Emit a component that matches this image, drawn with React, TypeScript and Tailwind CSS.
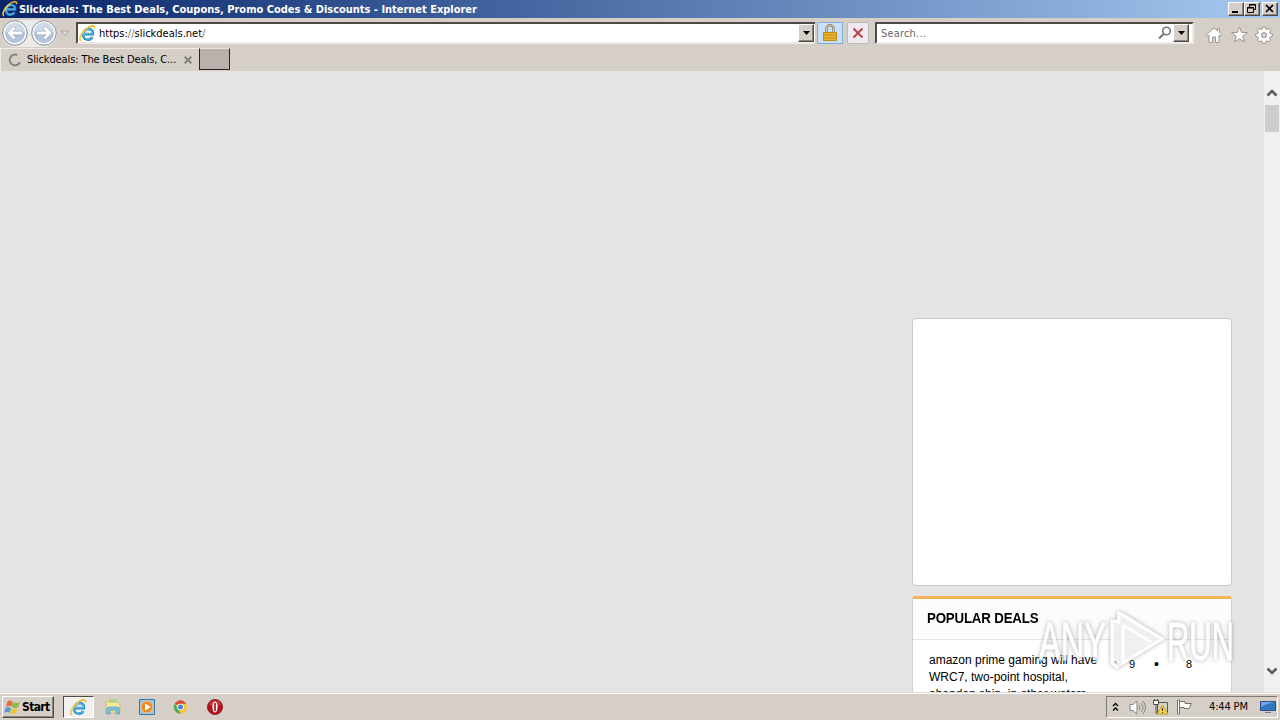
import React from "react";

const ui = "font-['DejaVu_Sans_Condensed','DejaVu_Sans',sans-serif] [font-stretch:condensed] whitespace-nowrap";
const raised = "border border-t-white border-l-white border-r-[#504b47] border-b-[#504b47] bg-[#d6cfc8] shadow-[inset_-1px_-1px_0_#8b8580]";

function IELogo({ size }: { size: number }) {
  return (
    <svg width={size} height={size} viewBox="0 0 16 16" className="shrink-0" fill="none">
      <path d="M12.6 11.2C11.200 13.300 9.300 14 7.500 13.700 4.700 13.300 3.500 11 4.100 8.300 4.800 5.300 7 3.700 9.500 3.900 12.300 4.200 13.500 6.200 13 8.600H5" stroke="#2c8fcc" strokeWidth="2.500" />
      <path d="M12.200 11.300C10.800 13.200 9.100 13.700 7.400 13.300 5 12.700 4 10.700 4.500 8.400 5.200 5.700 7 4.200 9.300 4.300 11.600 4.500 12.900 5.800 12.600 8.200H5" stroke="#6cc5ec" strokeWidth=".9" />
      <path d="M2 14.900C-.8 13.500 2.500 6.500 7.300 3.100 11 .5 15.400-.5 14.600 3.200" stroke="#e9b92f" strokeWidth="1.500" />
      <path d="M1.200 13.600C1.200 10 4.700 5.700 8 3.200" stroke="#f9e57c" strokeWidth=".7" />
    </svg>
  );
}

function NavCircle({ forward = false }: { forward?: boolean }) {
  return (
    <svg width="26" height="26" viewBox="0 0 26 26" className="shrink-0">
      <circle cx="13" cy="13" r="12.300" fill="#f4f6fa" stroke="#858b95" />
      <circle cx="13" cy="13" r="10.500" fill="#b3c3d8" stroke="#fff" />
      <path d="M3.500 12a9.500 9.500 0 0 1 19 0q-10 3-19 0" fill="#cfdae7" />
      <g transform={forward ? "matrix(-1 0 0 1 26 0)" : undefined}>
        <path d="M5 13 11.500 6.500 14 8.500 11 11.200H20.500v3.600H11l3 2.700-2.500 2z" fill="#fff" stroke="#94a7c0" strokeWidth=".6" />
      </g>
    </svg>
  );
}

function DropButton() {
  return (
    <div className={`flex h-[18px] w-4 shrink-0 items-center justify-center ${raised}`}>
      <svg width="7" height="4" viewBox="0 0 7 4"><path d="M0 0h7L3.5 4z" fill="#000" /></svg>
    </div>
  );
}

function TitleBar() {
  return (
    <header className="flex h-[18px] shrink-0 items-center bg-linear-to-r from-[#0a246a] to-[#a6caf0] pr-[2px] pl-[2px]">
      <IELogo size={16} />
      <span className="mt-[1px] ml-[1px] w-[470px] font-['DejaVu_Sans_Condensed','DejaVu_Sans',sans-serif] text-[11px] leading-4 font-bold tracking-[-0.02px] whitespace-nowrap text-white [font-stretch:condensed]">
        Slickdeals: The Best Deals, Coupons, Promo Codes &amp; Discounts - Internet Explorer
      </span>
      <div className="ml-auto flex">
        <div className={`h-[14px] w-4 ${raised}`}>
          <svg width="14" height="12" viewBox="0 0 14 12"><path d="M3 8h6v2H3z" /></svg>
        </div>
        <div className={`h-[14px] w-4 ${raised}`}>
          <svg width="14" height="12" viewBox="0 0 14 12" fill="none" stroke="#000"><path d="M4.500 4V1.500h6v5H9M4 2h7M2.500 4.500h6v5h-6zM2 5h7" /></svg>
        </div>
        <div className={`ml-[2px] h-[14px] w-4 ${raised}`}>
          <svg width="14" height="12" viewBox="0 0 14 12" fill="none" stroke="#000" strokeWidth="1.7"><path d="m3 2 7 7m0-7L3 9" /></svg>
        </div>
      </div>
    </header>
  );
}

function NavBar() {
  return (
    <div className="flex h-[30px] shrink-0 items-start pt-[2px] pl-[2px]">
      <div className="flex h-[27px] gap-[3px] rounded-full bg-[#edebea]">
        <NavCircle />
        <NavCircle forward />
      </div>
      <svg width="10" height="7" viewBox="0 0 10 7" className="mt-[10px] ml-[3px]"><path d="M1 1h8L5 5.500z" fill="#e5e0dc" stroke="#aaa39e" /></svg>
      <div className="mt-[2px] ml-[6px] flex h-[22px] w-[739px] items-center border-t-2 border-b-2 border-l-2 border-t-[#514744] border-b-[#eee9e6] border-l-[#514744] bg-white pr-px pl-[1px]">
        <IELogo size={17} />
        <span className={`${ui} mt-[2px] ml-[3px] text-[11px] tracking-[0px]`}>https:<span className="text-[#777]">//</span>slickdeals.net<span className="text-[#777]">/</span></span>
        <div className="ml-auto"><DropButton /></div>
      </div>
      <div className="mt-[2px] ml-[2px] flex h-[22px] w-[26px] items-center justify-center border border-[#7eafe0] bg-[#c9e0f7]">
        <svg width="14" height="18" viewBox="0 0 14 18" fill="none">
          <path d="M3.500 9V4.700a3.500 3.500 0 0 1 7 0V9" stroke="#8d8069" strokeWidth="2.400" />
          <path d="M3.500 9V4.700a3.500 3.500 0 0 1 7 0V9" stroke="#e2d9bd" strokeWidth=".8" />
          <path d="M.5 8.500h13v8H.5z" fill="#e9b528" stroke="#c08a20" />
          <path d="M1 11h12M1 14h12" stroke="#c38e20" />
        </svg>
      </div>
      <div className="mt-[2px] ml-[4px] flex h-[22px] w-[22px] items-center justify-center rounded-[2px] border border-[#bbb7ba] bg-[#eeeaf0]">
        <svg width="12" height="12" viewBox="0 0 12 12" fill="none"><path d="m1.500 1.500 9 9m0-9-9 9" stroke="#b8454b" strokeWidth="2" /></svg>
      </div>
      <div className="mt-[2px] ml-[6px] flex h-[22px] w-[319px] items-center border-2 border-t-[#514744] border-r-[#eee9e6] border-b-[#eee9e6] border-l-[#514744] bg-white pr-[3px] pl-[4px]">
        <span className={`${ui} mt-[2px] text-[11px] tracking-[0.18px] text-[#686868]`}>Search...</span>
        <svg width="14" height="14" viewBox="0 0 14 14" className="ml-auto" fill="none" stroke="#77777c"><circle cx="8.500" cy="5" r="3.800" strokeWidth="1.600" /><path d="m5.500 8-4.400 4.500" strokeWidth="2.200" /></svg>
        <div className="ml-[1px]"><DropButton /></div>
      </div>
      <div className="mt-[6px] ml-[11px] flex gap-[7px]">
        <svg width="18" height="18" viewBox="0 0 18 18" fill="#fff" stroke="#9a9693"><path d="m9 1.800-7.600 7 1.300 1.400L4 9.100v7.400h3.500V11h3v5.500H14V9.100l1.300 1.100 1.300-1.400-2.100-2V2.500h-2v2.400z" /></svg>
        <svg width="18" height="18" viewBox="0 0 18 18" fill="#fff" stroke="#9a9693"><path d="m9.500.9 2 5.500 5.900.2-4.700 3.600 1.700 5.700-4.900-3.300-4.900 3.300 1.700-5.700-4.700-3.600 5.900-.2z" /></svg>
        <svg width="18" height="18" viewBox="0 0 18 18" fill="#fff" stroke="#9a9693"><path d="m7.600 1 2.800 0 .5 2.100 1.100.5L14 2.500l1.800 1.900-1.200 1.900.6 1.200 2.100.5v2.400l-2.100.5-.6 1.300 1.200 1.900-1.800 1.900-2-1.200-1.100.5-.5 2.100H7.600l-.5-2.100-1.100-.5-2 1.200-1.800-1.900 1.200-1.900-.6-1.300-2.100-.5V8l2.100-.5.6-1.200-1.200-1.900L4 2.500l2 1.100 1.100-.5z" /><circle cx="9" cy="9.200" r="2.600" fill="#d6cfc8" /></svg>
      </div>
    </div>
  );
}

function Tabs() {
  return (
    <div className="flex h-[23px] shrink-0">
      <div className="flex h-[23px] w-[199px] items-center border-t border-l border-[#f0ece9] pl-[7px]">
        <svg width="14" height="14" viewBox="0 0 14 14" fill="none"><path d="M9.300 2A5.400 5.400 0 1 0 12 9.300" stroke="#858382" strokeWidth="2" /></svg>
        <span className={`${ui} mt-[1px] ml-[5px] w-[150px] text-[11px] tracking-[-0.11px]`}>Slickdeals: The Best Deals, C...</span>
        <svg width="8" height="8" viewBox="0 0 8 8" className="ml-[7px]" stroke="#858281" strokeWidth="2"><path d="m.7.7 6.600 6.600m0-6.600L.7 7.300" /></svg>
      </div>
      <div className="h-[22px] w-[31px] border border-t-[#e9e4e1] border-r-[#292322] border-b-[#292322] border-l-[#292322] bg-[#bab1ad]" />
    </div>
  );
}

function ScrollBar() {
  return (
    <div className="flex w-4 shrink-0 flex-col items-center bg-[#f0f0f0] pt-[18px] pb-[17px]">
      <svg width="12" height="8" viewBox="0 0 12 8" fill="none"><path d="m1.500 6.500 4.500-4.500 4.500 4.500" stroke="#5c5c5c" strokeWidth="2.600" /></svg>
      <div className="mt-[8px] h-[27px] w-[14px] bg-[#cdcdcd]" />
      <svg width="12" height="8" viewBox="0 0 12 8" fill="none" className="mt-auto"><path d="m1.500 1.500 4.500 4.500 4.500-4.500" stroke="#5c5c5c" strokeWidth="2.600" /></svg>
    </div>
  );
}

function Watermark() {
  return (
    <svg width="204" height="76" viewBox="0 0 204 76" className="absolute top-[534px] left-[1036px]" fill="none">
      <g style={{ filter: "drop-shadow(0 0 2px #55555599)" }} opacity=".8">
        <g fontFamily="'Liberation Sans', sans-serif" fontSize="53" fill="#fff" stroke="#fff" strokeWidth="1">
          <text x="3" y="55" textLength="67" lengthAdjust="spacingAndGlyphs">ANY</text>
          <text x="131" y="55" textLength="67" lengthAdjust="spacingAndGlyphs">RUN</text>
        </g>
        <path d="M75 15h6V8l5-1 42 26-42 27-5 3v-7h-6z" fill="#ededed" />
        <g stroke="#fff" strokeWidth="3">
          <path d="M87 20v38L126 34 83 8v11" />
          <path d="M82 16h-6v42l6 5" />
          <path d="m87 20 28 17" />
        </g>
      </g>
    </svg>
  );
}

function Page() {
  return (
    <main className="relative flex h-[621px] shrink-0 overflow-hidden bg-[#e4e4e4]">
      <div className="flex min-w-0 flex-1 justify-end pt-[247px] pr-8">
        <aside className="flex w-[320px] flex-col gap-[10px] font-['Liberation_Sans',sans-serif]">
          <section className="h-[268px] shrink-0 rounded-[4px] border border-[#c9c9c9] bg-white" />
          <section className="h-[140px] shrink-0 rounded-t-[3px] border border-t-[3px] border-[#d1d1d1] border-t-[#f4b355] bg-white">
            <h2 className="flex h-[41px] items-center border-b border-[#e4e4e4] bg-[#fcfcfc] pb-px pl-[14px] text-[14px] font-bold"><span className="origin-left scale-x-[.947] tracking-[-0.17px]">POPULAR DEALS</span></h2>
            <div className="flex text-[12px] leading-[17px]">
              <p className="w-[215px] pt-[12px] pl-4 whitespace-nowrap">amazon prime gaming will have<br />WRC7, two-point hospital,<br />abandon ship, in other waters</p>
              <div className="flex pt-[16px] pl-[1px] text-[11px]"><span className="w-[25px]">9</span><span className="w-[32px] text-[14px]">•</span><span>8</span></div>
            </div>
          </section>
        </aside>
      </div>
      <ScrollBar />
      <Watermark />
    </main>
  );
}

function TaskBar() {
  return (
    <footer className="flex h-[28px] shrink-0 border-t border-[#e0dbd7] bg-[#d6cfc8] shadow-[inset_0_1px_0_#fff]">
      <button className={`mt-[3px] ml-[2px] flex h-[22px] w-[52px] items-center pl-[1px] ${raised}`}>
        <svg width="17" height="17" viewBox="0 0 17 17">
          <path d="M3.500 2.500q2.500-2 5 0l-1 5Q5 6 2 8z" fill="#e56d31" /><path d="M9 3q3.500 2 7 0l-2 5q-2.500 2-6 0z" fill="#8ab64a" />
          <path d="M1.500 9q2.500-2 5.500 0l-1.500 5q-3-2-5.500 0z" fill="#549bd0" /><path d="M7.700 9q3 2 6 0l-1.700 5q-3 2-6 0z" fill="#efc43c" />
        </svg>
        <span className="ml-[1px] font-['DejaVu_Sans_Condensed','DejaVu_Sans',sans-serif] text-[12px] font-bold tracking-[-0.65px] [font-stretch:condensed]">Start</span>
      </button>
      <div className="mt-[3px] ml-[9px] flex h-[22px] w-[31px] items-center justify-center border border-t-[#504b47] border-r-white border-b-white border-l-[#504b47] bg-[#f3f1ef]"><IELogo size={17} /></div>
      <div className="mt-[5px] ml-[11px] flex items-start gap-[18px]">
        <svg width="16" height="17" viewBox="0 0 16 17"><path d="M1 3h6l1 2h7v10H1z" fill="#ebd78e" stroke="#d3b96c" strokeWidth=".7" /><path d="M4 1h8v6H4z" fill="#b6d58b" /><path d="M2 5h12v4H2z" fill="#f8e99e" /><path d="M1.500 16v-4q0-3 3-3h7q3 0 3 3v4H11v-4H5v4z" fill="#7bc0dc" stroke="#5b9fba" strokeWidth=".7" /></svg>
        <svg width="16" height="17" viewBox="0 0 16 17"><path d="M.5 1.500h15v15H.5z" fill="#9bc4e2" stroke="#3979a9" /><circle cx="8" cy="9" r="6" fill="#ed8a22" stroke="#f8ca8c" /><path d="M6 5.500v7l6-3.500z" fill="#fff" /></svg>
        <svg width="15" height="17" viewBox="0 -1 16 17"><circle cx="8" cy="8" r="7" fill="#f3c52f" /><path d="M8 8 2 4.200A7 7 0 0 1 14 4.500H8z" fill="#d94b3d" /><path d="M2 4.200 8 15A7 7 0 0 1 2 4.200" fill="#4aa663" /><circle cx="8" cy="8" r="3.500" fill="#fff" /><circle cx="8" cy="8" r="2.700" fill="#4b83d4" /></svg>
        <svg width="16" height="17" viewBox="0 0 16 17" className="ml-px"><circle cx="8" cy="9" r="7.600" fill="#b51318" stroke="#701012" strokeWidth=".7" /><path d="M2 6.500a6.500 6.500 0 0 1 12 0Q8 9.500 2 6.500" fill="#ce4548" opacity=".7" /><ellipse cx="8" cy="9" rx="2.600" ry="5.500" fill="#fff" /><path d="M8 5v8" stroke="#b61c20" strokeWidth="1.800" /></svg>
      </div>
      <div className="mt-[3px] mr-[2px] ml-auto flex h-[22px] w-[172px] items-center border border-t-[#807974] border-r-white border-b-white border-l-[#807974] pl-[5px]">
        <svg width="7" height="10" viewBox="0 0 7 10" fill="none" stroke="#000" strokeWidth="1.300"><path d="m1 4 2.500-2.500L6 4M1 8.500 3.500 6 6 8.500" /></svg>
        <svg width="17" height="17" viewBox="0 0 17 17" className="ml-[10px]" fill="#fff" stroke="#858280"><path d="M1 5.500h3L8 2v13l-4-3.500H1z" /><path d="M10 6q2 2.500 0 5m2-7q4 4.500 0 9m2-11q5 6.500 0 13" fill="none" /></svg>
        <svg width="17" height="16" viewBox="0 0 17 16" className="ml-[6px]"><path d="M5.500 3.500h10v10h-10z" fill="#d4d5ca" stroke="#57574f" /><path d="M1.500 1.500h5v4h-5z" fill="#fff" stroke="#505050" /><path d="M4 5.500v9h4M2.500 0v2m3-2v2" fill="none" stroke="#505050" /><path d="m10.500 6 5.500 9H5z" fill="#f6d640" stroke="#c29b15" /><path d="M10.500 9v3m0 1v1" stroke="#333" /></svg>
        <svg width="17" height="16" viewBox="0 0 17 16" className="ml-[7px]" fill="#fff" stroke="#76716d"><path d="M1.500 1v14h2V1z" /><path d="M3.500 2.500H9v2h6.500L13 9.500H8v-1H3.500z" /></svg>
        <span className={`${ui} mt-px ml-[16px] w-[40px] text-[11px] tracking-[-0.15px]`}>4:44 PM</span>
        <svg width="16" height="14" viewBox="0 0 16 14" className="ml-[11px]"><path d="M.5 1.500h15v9H.5z" fill="#3476c2" stroke="#294f89" /><path d="M1 2h14q-8 1-14 5z" fill="#74a9df" /><path d="M5 12h6v1H5z" fill="#637f9f" /></svg>
      </div>
    </footer>
  );
}

export default function App() {
  return (
    <div className="flex h-[720px] w-[1280px] flex-col overflow-hidden bg-[#d6cfc8] text-black">
      <TitleBar />
      <NavBar />
      <Tabs />
      <Page />
      <TaskBar />
    </div>
  );
}
